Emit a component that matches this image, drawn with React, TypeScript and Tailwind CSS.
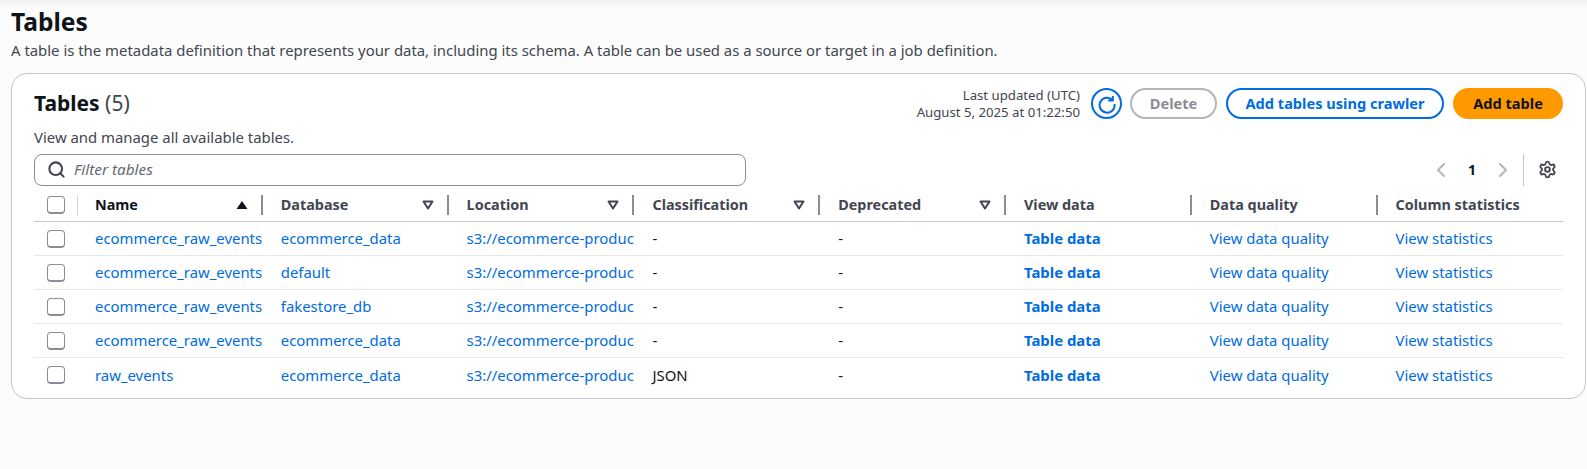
import { ChevronLeft, ChevronRight, Search, Settings } from "lucide-react";

const rows = [
  { name: "ecommerce_raw_events", db: "ecommerce_data", cls: "-" },
  { name: "ecommerce_raw_events", db: "default", cls: "-" },
  { name: "ecommerce_raw_events", db: "fakestore_db", cls: "-" },
  { name: "ecommerce_raw_events", db: "ecommerce_data", cls: "-" },
  { name: "raw_events", db: "ecommerce_data", cls: "JSON" },
];

const columns = [
  { label: "Name", sort: "active" },
  { label: "Database", sort: "idle" },
  { label: "Location", sort: "idle" },
  { label: "Classification", sort: "idle" },
  { label: "Deprecated", sort: "idle" },
  { label: "View data", sort: "none" },
  { label: "Data quality", sort: "none" },
  { label: "Column statistics", sort: "none" },
];

const Checkbox = () => (
  <div className="h-[18px] w-[18px] rounded-[4px] border border-[#8c8c94] border-b-2 bg-white" />
);

const SortIcon = ({ active }: { active: boolean }) => (
  <svg width="12" height="10" viewBox="0 0 12 10" className="shrink-0">
    {active ? (
      <path d="M6 1 L11.5 9 H0.5 Z" fill="#0f141a" />
    ) : (
      <path d="M1.5 1.5 H10.5 L6 8.5 Z" fill="none" stroke="#424650" strokeWidth="2" strokeLinejoin="round" />
    )}
  </svg>
);

const App = () => {
  return (
    <div className="h-[469px] w-[1587px] overflow-hidden bg-[#fcfcfc] font-['Noto_Sans',sans-serif] text-[14.9px] text-[#0f141a]">
      <div className="h-[8px] bg-gradient-to-b from-[#efeff0] to-[#fcfcfc]" />
      <div className="pl-[11px] pr-[1px]">
        <h1 className="-mt-[1px] text-[24.6px] font-bold leading-[30px]">Tables</h1>
        <p className="mt-[3px] leading-[20px] text-[#424650]">
          A table is the metadata definition that represents your data, including its schema. A table can be used as a source or target in a job definition.
        </p>
        <div className="mt-[13px] h-[326px] rounded-[16px] border border-[#c6c6cd] bg-white pl-[22px] pr-[22px]">
          <div className="flex h-[79px] justify-between pt-[14px]">
            <div>
              <div className="mt-[2px] text-[21px] leading-[26px]">
                <span className="font-bold">Tables</span> <span className="text-[#424650]">(5)</span>
              </div>
              <p className="mt-[11px] leading-[20px] text-[#424650]">View and manage all available tables.</p>
            </div>
            <div className="flex h-[31px] items-center">
              <div className="text-right text-[13.2px] leading-[17px] text-[#424650]">
                <div>Last updated (UTC)</div>
                <div>August 5, 2025 at 01:22:50</div>
              </div>
              <div className="ml-[11px] flex h-[31px] w-[31px] items-center justify-center rounded-full border-2 border-[#006ce0] text-[#006ce0]">
                <svg width="20" height="20" viewBox="0 0 20 20" fill="none" stroke="currentColor" strokeWidth="2">
                  <path d="M15.5 6 A7.5 7.5 0 1 0 17.5 10" />
                  <path d="M15.8 2 V6.5 H11.2" />
                </svg>
              </div>
              <button className="ml-[8px] h-[31px] w-[87px] rounded-full border-2 border-[#b4b4bb] bg-white text-[14.6px] font-bold text-[#8c8c94]">Delete</button>
              <button className="ml-[9px] h-[31px] w-[218px] rounded-full border-2 border-[#006ce0] bg-white text-[14.6px] font-bold text-[#006ce0]">Add tables using crawler</button>
              <button className="ml-[9px] h-[31px] w-[110px] rounded-full bg-[#ff9900] text-[14.6px] font-bold">Add table</button>
            </div>
          </div>
          <div className="flex h-[33px] items-center justify-between">
            <div className="flex h-[32px] w-[712px] items-center gap-[8px] rounded-[8px] border border-[#8c8c94] bg-white px-[12px]">
              <Search size={19} strokeWidth={2.6} className="text-[#424650]" />
              <span className="text-[15.3px] italic text-[#656871]">Filter tables</span>
            </div>
            <div className="flex items-center pr-[6px]">
              <ChevronLeft size={24} strokeWidth={2} className="text-[#b4b4bb]" />
              <span className="mx-[15px] text-[14px] font-bold">1</span>
              <ChevronRight size={24} strokeWidth={2} className="text-[#b4b4bb]" />
              <div className="ml-[8px] mr-[14px] h-[32px] w-px bg-[#c6c6cd]" />
              <Settings size={19} strokeWidth={2.4} className="text-[#424650]" />
            </div>
          </div>
          <div className="mt-[3px] flex h-[33px] items-center border-b border-[#c6c6cd]">
            <div className="relative flex h-full w-[61px] shrink-0 items-center pl-[13px]">
              <Checkbox />
              <div className="absolute right-[17px] h-[20px] w-px bg-[#d5d5da]" />
            </div>
            {columns.map((col) => (
              <div key={col.label} className="relative flex h-full w-[185.8px] shrink-0 items-center justify-between pr-[33px] text-[14.4px] font-bold text-[#424650]">
                <span className={col.label === "Name" ? "text-[#0f141a]" : ""}>{col.label}</span>
                {col.sort !== "none" && <SortIcon active={col.sort === "active"} />}
                {col.label !== "Column statistics" && <div className="absolute right-[18px] h-[20px] w-[2px] bg-[#8c8c94]" />}
              </div>
            ))}
          </div>
          {rows.map((row, i) => (
            <div key={i} className={`flex h-[34px] items-center ${i < 4 ? "border-b border-[#e8e8ea]" : ""}`}>
              <div className="flex w-[61px] shrink-0 pl-[13px]">
                <Checkbox />
              </div>
              <a className="w-[185.8px] shrink-0 text-[#006ce0]">{row.name}</a>
              <a className="w-[185.8px] shrink-0 text-[#006ce0]">{row.db}</a>
              <a className="w-[185.8px] shrink-0 whitespace-nowrap text-[#006ce0]">s3://ecommerce-produc</a>
              <span className="w-[185.8px] shrink-0">{row.cls}</span>
              <span className="w-[185.8px] shrink-0">-</span>
              <a className="w-[185.8px] shrink-0 font-bold text-[#006ce0]">Table data</a>
              <a className="w-[185.8px] shrink-0 text-[#006ce0]">View data quality</a>
              <a className="w-[185.8px] shrink-0 text-[#006ce0]">View statistics</a>
            </div>
          ))}
        </div>
      </div>
    </div>
  );
};

export default App;
